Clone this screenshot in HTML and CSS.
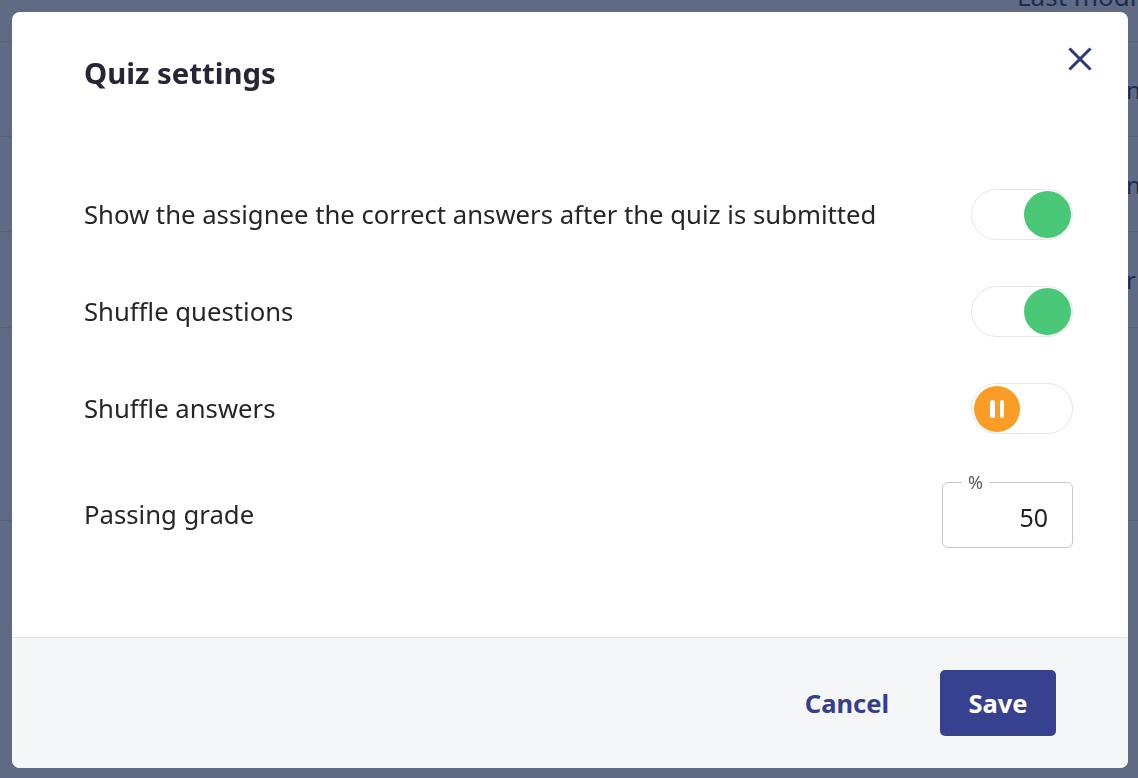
FILE: index.html
```html
<!DOCTYPE html>
<html lang="en">
<head>
<meta charset="utf-8">
<title>Quiz settings</title>
<link rel="stylesheet" href="styles.css">
</head>
<body>
<div class="page">
  <div class="page-row page-head"><span class="page-cell head-cell">Last modified</span></div>
  <div class="page-row r1"><span class="page-cell">n</span></div>
  <div class="page-row r2"><span class="page-cell">n</span></div>
  <div class="page-row r3"><span class="page-cell">r</span></div>
  <div class="page-row r4"><span class="page-cell"></span></div>
  <div class="page-row r5"><span class="page-cell"></span></div>
</div>

<div class="overlay">
  <div class="modal" role="dialog" aria-labelledby="quiz-title">
    <div class="modal-header">
      <h2 class="modal-title" id="quiz-title">Quiz settings</h2>
      <button class="close-btn" aria-label="Close">
        <svg width="24" height="24" viewBox="0 0 24 24" fill="none" stroke="currentColor" stroke-width="3" stroke-linecap="square">
          <path d="M2.5 2.5 L21.5 21.5 M21.5 2.5 L2.5 21.5"/>
        </svg>
      </button>
    </div>

    <div class="modal-body">
      <div class="setting-row">
        <span class="setting-label">Show the assignee the correct answers after the quiz is submitted</span>
        <span class="toggle toggle-on"><span class="knob knob-green"></span></span>
      </div>
      <div class="setting-row">
        <span class="setting-label">Shuffle questions</span>
        <span class="toggle toggle-on"><span class="knob knob-green"></span></span>
      </div>
      <div class="setting-row">
        <span class="setting-label">Shuffle answers</span>
        <span class="toggle toggle-off"><span class="knob knob-orange"><span class="bar"></span><span class="bar"></span></span></span>
      </div>
      <div class="setting-row grade-row">
        <span class="setting-label grade-label">Passing grade</span>
        <fieldset class="grade-field">
          <legend class="grade-legend">%</legend>
          <input class="grade-input" type="text" value="50" aria-label="Passing grade percent">
        </fieldset>
      </div>
    </div>

    <div class="modal-footer">
      <button class="btn-cancel">Cancel</button>
      <button class="btn-save">Save</button>
    </div>
  </div>
</div>
</body>
</html>
```

FILE: styles.css
```css
* { box-sizing: border-box; }

html, body {
  margin: 0;
  padding: 0;
  height: 100%;
}

body {
  background: #ffffff;
  font-family: "Noto Sans", "Open Sans", sans-serif;
  overflow: hidden;
}

/* backdrop page */
.page {
  height: 100%;
  display: flex;
  flex-direction: column;
  color: #1c2340;
  font-size: 24px;
}
.page-row {
  border-bottom: 1px solid #dde0e6;
  display: flex;
  justify-content: flex-end;
  align-items: center;
}
.page-head { height: 42px; align-items: flex-start; }
.r1 { height: 95px; }
.r2 { height: 95px; }
.r3 { height: 96px; }
.r4 { height: 193px; }
.r5 { height: 120px; border-bottom: none; }
.page-cell { width: 12px; white-space: nowrap; overflow: hidden; }
.head-cell { margin-top: -22px; width: 121px; font-size: 26px; }

/* dimming overlay + modal */
.overlay {
  position: fixed;
  inset: 0;
  background: rgba(33, 48, 84, 0.72);
  padding: 12px 10px 10px 12px;
  display: flex;
}

.modal {
  flex: 1;
  background: #ffffff;
  border-radius: 8px;
  display: flex;
  flex-direction: column;
  overflow: hidden;
}

.modal-header {
  display: flex;
  justify-content: space-between;
  align-items: flex-start;
  padding: 23px 24px 0 72px;
}

.modal-title {
  margin: 18px 0 0 0;
  font-size: 29.3px;
  line-height: 40px;
  font-weight: 700;
  color: #262634;
}

.close-btn {
  width: 48px;
  height: 48px;
  border: none;
  background: transparent;
  color: #2b3b74;
  display: flex;
  align-items: center;
  justify-content: center;
  padding: 0;
  cursor: pointer;
}

.modal-body {
  flex: 1;
  padding: 73px 55px 0 72px;
}

.setting-row {
  height: 97px;
  display: flex;
  justify-content: space-between;
  align-items: center;
}

.setting-label {
  font-size: 25.7px;
  color: #262626;
}

.toggle {
  width: 102px;
  height: 51px;
  border: 1px solid #e6e6e6;
  border-radius: 26px;
  padding: 1px;
  display: flex;
  background: #ffffff;
}
.toggle-on { justify-content: flex-end; }
.toggle-off { justify-content: flex-start; padding-left: 2px; }

.knob {
  width: 47px;
  height: 47px;
  border-radius: 50%;
  display: flex;
  align-items: center;
  justify-content: center;
  gap: 5px;
}
.knob-green { background: #4ac877; }
.knob-orange { background: #fa9c26; width: 46px; height: 46px; margin-top: 1px; }
.bar {
  width: 4.5px;
  height: 18px;
  background: #ffffff;
  border-radius: 3px;
}

.grade-row {
  height: 107px;
}
.grade-label { margin-top: 8px; }

.grade-field {
  width: 131px;
  margin: 0;
  border: 1px solid #c6c6c6;
  border-radius: 6px;
  padding: 0 24px 4px 12px;
}
.grade-legend {
  margin-left: 7px;
  padding: 0 6px;
  font-size: 18px;
  line-height: 18px;
  color: #5d5d5d;
}
.grade-input {
  display: block;
  width: 100%;
  height: 52px;
  border: none;
  outline: none;
  background: transparent;
  padding: 0;
  text-align: right;
  font-family: "Noto Sans", sans-serif;
  font-size: 25px;
  color: #222222;
}

.modal-footer {
  height: 131px;
  background: #f5f6f8;
  border-top: 1px solid #e3e5ea;
  display: flex;
  justify-content: flex-end;
  align-items: center;
  gap: 27px;
  padding: 0 72px 0 0;
}

.btn-cancel,
.btn-save {
  font-family: "Noto Sans", sans-serif;
  font-size: 25.5px;
  font-weight: 700;
  border: none;
  cursor: pointer;
  height: 66px;
  border-radius: 5px;
}
.btn-cancel {
  background: transparent;
  color: #363f8f;
  padding: 0 24px;
}
.btn-save {
  background: #36418f;
  color: #ffffff;
  width: 116px;
  padding: 0;
}
```
